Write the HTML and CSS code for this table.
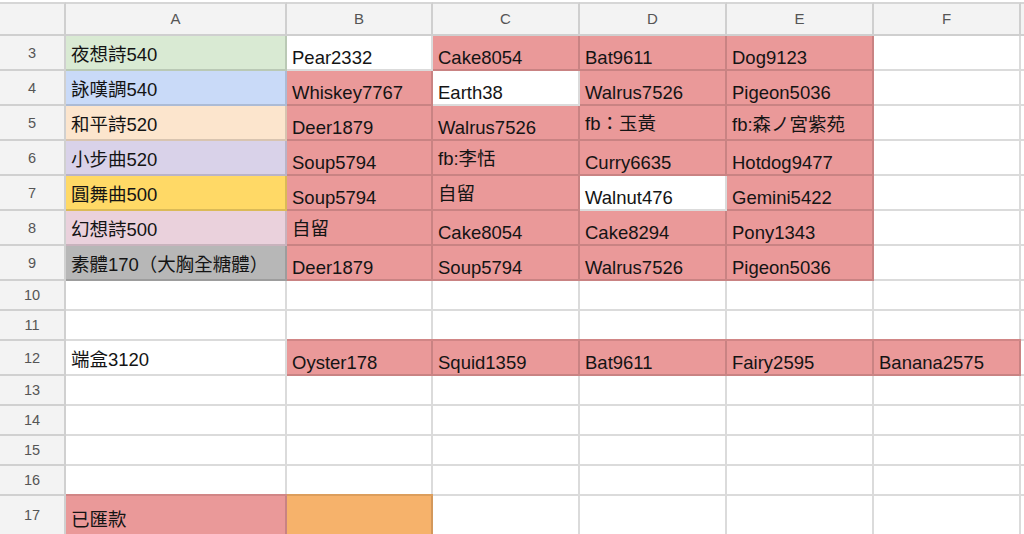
FILE: index.html
```html
<!DOCTYPE html>
<html lang="zh-Hant">
<head>
    <meta charset="UTF-8">
    <meta name="viewport" content="width=device-width, initial-scale=1.0">
    <title>名單</title>
    <link rel="stylesheet" href="styles.css">
</head>
<body>
    <div class="sheet">
        <div class="row head">
            <div class="cell num"></div>
            <div class="cell col">A</div>
            <div class="cell col">B</div>
            <div class="cell col">C</div>
            <div class="cell col">D</div>
            <div class="cell col">E</div>
            <div class="cell col">F</div>
            <div class="cell col end"></div>
        </div>

        <div class="row">
            <div class="cell num">3</div>
            <div class="cell a green">夜想詩540</div>
            <div class="cell">Pear2332</div>
            <div class="cell red">Cake8054</div>
            <div class="cell red">Bat9611</div>
            <div class="cell red">Dog9123</div>
            <div class="cell"></div>
            <div class="cell end"></div>
        </div>
        <div class="row">
            <div class="cell num">4</div>
            <div class="cell a blue">詠嘆調540</div>
            <div class="cell red">Whiskey7767</div>
            <div class="cell">Earth38</div>
            <div class="cell red">Walrus7526</div>
            <div class="cell red">Pigeon5036</div>
            <div class="cell"></div>
            <div class="cell end"></div>
        </div>
        <div class="row">
            <div class="cell num">5</div>
            <div class="cell a peach">和平詩520</div>
            <div class="cell red">Deer1879</div>
            <div class="cell red">Walrus7526</div>
            <div class="cell red hi">fb：玉黃</div>
            <div class="cell red a">fb:森ノ宮紫苑</div>
            <div class="cell"></div>
            <div class="cell end"></div>
        </div>
        <div class="row">
            <div class="cell num">6</div>
            <div class="cell a lavender">小步曲520</div>
            <div class="cell red">Soup5794</div>
            <div class="cell red hi">fb:李恬</div>
            <div class="cell red">Curry6635</div>
            <div class="cell red">Hotdog9477</div>
            <div class="cell"></div>
            <div class="cell end"></div>
        </div>
        <div class="row">
            <div class="cell num">7</div>
            <div class="cell a yellow">圓舞曲500</div>
            <div class="cell red">Soup5794</div>
            <div class="cell red hi">自留</div>
            <div class="cell">Walnut476</div>
            <div class="cell red">Gemini5422</div>
            <div class="cell"></div>
            <div class="cell end"></div>
        </div>
        <div class="row">
            <div class="cell num">8</div>
            <div class="cell a pink">幻想詩500</div>
            <div class="cell red hi">自留</div>
            <div class="cell red">Cake8054</div>
            <div class="cell red">Cake8294</div>
            <div class="cell red">Pony1343</div>
            <div class="cell"></div>
            <div class="cell end"></div>
        </div>
        <div class="row">
            <div class="cell num">9</div>
            <div class="cell a grey">素體170（大胸全糖體）</div>
            <div class="cell red">Deer1879</div>
            <div class="cell red">Soup5794</div>
            <div class="cell red">Walrus7526</div>
            <div class="cell red">Pigeon5036</div>
            <div class="cell"></div>
            <div class="cell end"></div>
        </div>

        <div class="row short">
            <div class="cell num">10</div>
            <div class="cell"></div><div class="cell"></div><div class="cell"></div>
            <div class="cell"></div><div class="cell"></div><div class="cell"></div>
            <div class="cell end"></div>
        </div>
        <div class="row short">
            <div class="cell num">11</div>
            <div class="cell"></div><div class="cell"></div><div class="cell"></div>
            <div class="cell"></div><div class="cell"></div><div class="cell"></div>
            <div class="cell end"></div>
        </div>

        <div class="row">
            <div class="cell num">12</div>
            <div class="cell a">端盒3120</div>
            <div class="cell red top">Oyster178</div>
            <div class="cell red top">Squid1359</div>
            <div class="cell red top">Bat9611</div>
            <div class="cell red top">Fairy2595</div>
            <div class="cell red top">Banana2575</div>
            <div class="cell end"></div>
        </div>

        <div class="row short">
            <div class="cell num">13</div>
            <div class="cell"></div><div class="cell"></div><div class="cell"></div>
            <div class="cell"></div><div class="cell"></div><div class="cell"></div>
            <div class="cell end"></div>
        </div>
        <div class="row short">
            <div class="cell num">14</div>
            <div class="cell"></div><div class="cell"></div><div class="cell"></div>
            <div class="cell"></div><div class="cell"></div><div class="cell"></div>
            <div class="cell end"></div>
        </div>
        <div class="row short">
            <div class="cell num">15</div>
            <div class="cell"></div><div class="cell"></div><div class="cell"></div>
            <div class="cell"></div><div class="cell"></div><div class="cell"></div>
            <div class="cell end"></div>
        </div>
        <div class="row short">
            <div class="cell num">16</div>
            <div class="cell"></div><div class="cell"></div><div class="cell"></div>
            <div class="cell"></div><div class="cell"></div><div class="cell"></div>
            <div class="cell end"></div>
        </div>

        <div class="row last">
            <div class="cell num">17</div>
            <div class="cell a red top">已匯款</div>
            <div class="cell orange top"></div>
            <div class="cell"></div><div class="cell"></div><div class="cell"></div>
            <div class="cell"></div>
            <div class="cell end"></div>
        </div>
    </div>
</body>
</html>
```

FILE: styles.css
```css
/* Lembar kerja sederhana, gaya Google Sheets */
body {
    margin: 0;
    background-color: #ffffff;
    font-family: "Liberation Sans", "Noto Sans CJK TC", sans-serif;
    color: #141414;
    overflow: hidden;
}

.sheet {
    padding-top: 2px;
}

.row {
    display: grid;
    grid-template-columns: 66px 221px 146px 147px 147px 147px 147px 1fr;
    height: 35px;
}

.row.head {
    height: 34px;
}

.row.short {
    height: 30px;
}

.row.last {
    height: 40px;
}

.cell {
    box-sizing: border-box;
    display: flex;
    align-items: flex-end;
    padding: 0 5px 1.5px;
    border-right: 2px solid rgba(0, 0, 0, 0.14);
    border-bottom: 2px solid rgba(0, 0, 0, 0.14);
    font-size: 18.5px;
    line-height: 20px;
    white-space: nowrap;
    overflow: hidden;
}

.cell.end {
    border-right: none;
}

/* kepala kolom dan nomor baris */
.head .cell {
    border-top: 2px solid #d6d6d6;
}

.num,
.col {
    justify-content: center;
    align-items: center;
    padding: 0;
    background-color: #f3f3f3;
    color: #555555;
}

.col {
    font-size: 15px;
}

.num {
    font-size: 14.5px;
}

.head .end {
    background-color: #f3f3f3;
}

/* posisi teks */
.a {
    padding-bottom: 4px;
}

.hi {
    padding-bottom: 5.5px;
}

/* warna isian */
.green    { background-color: #d9ead3; }
.blue     { background-color: #c9daf8; }
.peach    { background-color: #fce5cd; }
.lavender { background-color: #d9d2e9; }
.yellow   { background-color: #ffd966; }
.pink     { background-color: #ead1dc; }
.grey     { background-color: #b7b7b7; }
.red      { background-color: #ea9999; }
.orange   { background-color: #f6b26b; }

.red.top {
    box-shadow: 0 -2px 0 #d18686;
}

.orange.top {
    box-shadow: 0 -2px 0 #dc9e5c;
}
```
